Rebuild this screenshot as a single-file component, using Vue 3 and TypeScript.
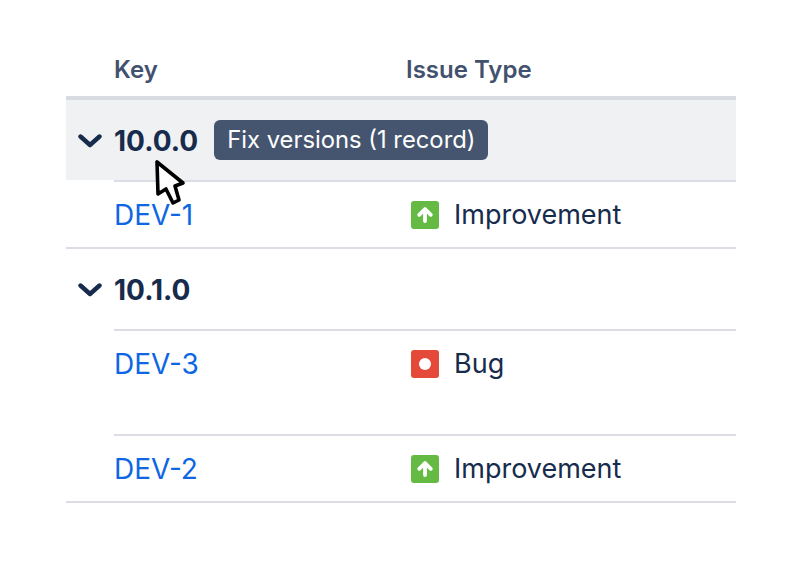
<script setup lang="ts">
interface Row { key: string; type: 'Improvement' | 'Bug'; tall?: boolean; last?: boolean }
interface Group { name: string; badge?: string; rows: Row[] }
const groups: Group[] = [
  { name: '10.0.0', badge: 'Fix versions (1 record)', rows: [{ key: 'DEV-1', type: 'Improvement', last: true }] },
  { name: '10.1.0', rows: [
    { key: 'DEV-3', type: 'Bug', tall: true },
    { key: 'DEV-2', type: 'Improvement', last: true },
  ] },
]
</script>

<template>
  <div class="page">
    <div class="table">
      <div class="head">
        <div class="key-col">Key</div>
        <div>Issue Type</div>
      </div>
      <section v-for="(g, gi) in groups" :key="g.name">
        <div class="group" :class="{ active: gi === 0 }">
          <svg class="chev" viewBox="0 0 24 14" width="24" height="14">
            <path d="M2.5 2.5 L12 11 L21.5 2.5" fill="none" stroke="#172b4d" stroke-width="4.4" stroke-linecap="round" stroke-linejoin="round" />
          </svg>
          <span class="gname">{{ g.name }}</span>
          <span v-if="g.badge" class="badge">{{ g.badge }}</span>
        </div>
        <div v-for="r in g.rows" :key="r.key" class="row" :class="{ tall: r.tall, last: r.last }">
          <div class="cell-key"><a class="link">{{ r.key }}</a></div>
          <div class="cell-type">
            <svg v-if="r.type === 'Improvement'" class="ico" viewBox="0 0 28 28" width="28" height="28">
              <rect width="28" height="28" rx="3" fill="#65ba43" />
              <path d="M14 20 V9 M8.2 13.8 L14 8 L19.8 13.8" fill="none" stroke="#fff" stroke-width="3.8" stroke-linecap="round" stroke-linejoin="round" />
            </svg>
            <svg v-else class="ico" viewBox="0 0 28 28" width="28" height="28">
              <rect width="28" height="28" rx="3" fill="#e5493a" />
              <circle cx="14" cy="14" r="6" fill="#fff" />
            </svg>
            <span>{{ r.type }}</span>
          </div>
        </div>
      </section>
    </div>
    <svg class="cursor" viewBox="0 0 34 50" width="34" height="50">
      <path d="M4 4 L5 36 L13 31 L20 45 L26 42 L22 28 L30 25 Z" fill="#fff" stroke="#000" stroke-width="3.6" stroke-linejoin="round" />
    </svg>
  </div>
</template>

<style scoped>
.page {
  position: relative;
  width: 800px;
  height: 575px;
  box-sizing: border-box;
  padding: 46px 64px 0 66px;
  background: #fff;
  font-family: Inter, "Noto Sans", sans-serif;
  color: #172b4d;
  overflow: hidden;
}
.head {
  display: flex;
  box-sizing: border-box;
  padding: 8px 0 0 48px;
  border-bottom: 4px solid #d8dbe2;
  height: 54px;
  font-size: 24px;
  font-weight: 600;
  line-height: 32px;
  color: #42526e;
}
.key-col { width: 292px; }
.group {
  display: flex;
  align-items: center;
  height: 80px;
  box-sizing: border-box;
  padding: 1px 0 0 12px;
}
.group.active { background: #f0f1f3; }
.chev { margin-right: 12px; }
.gname {
  font-size: 28px;
  font-weight: 700;
  line-height: 40px;
}
.badge {
  margin: -1px 0 0 16px;
  height: 40px;
  line-height: 40px;
  padding: 0 13px;
  border-radius: 6px;
  background: #455570;
  color: #fff;
  font-size: 23.8px;
}
.row {
  display: flex;
  margin-left: 48px;
  padding-top: 13px;
  box-sizing: border-box;
  border-top: 2px solid #dcdde4;
  font-size: 27px;
  line-height: 40px;
  height: 69px;
}
.row.tall { height: 105px; }
.row.last { position: relative; }
.row.last::after {
  content: "";
  position: absolute;
  left: -48px;
  right: 0;
  bottom: 0;
  height: 2px;
  background: #dcdde4;
}
.cell-key { width: 292px; }
.link { color: #0f66e3; font-size: 28px; }
.cell-type { display: flex; align-items: center; height: 40px; padding-left: 5px; }
.ico { margin-right: 15px; }
.cursor { position: absolute; left: 153px; top: 158px; }
</style>
